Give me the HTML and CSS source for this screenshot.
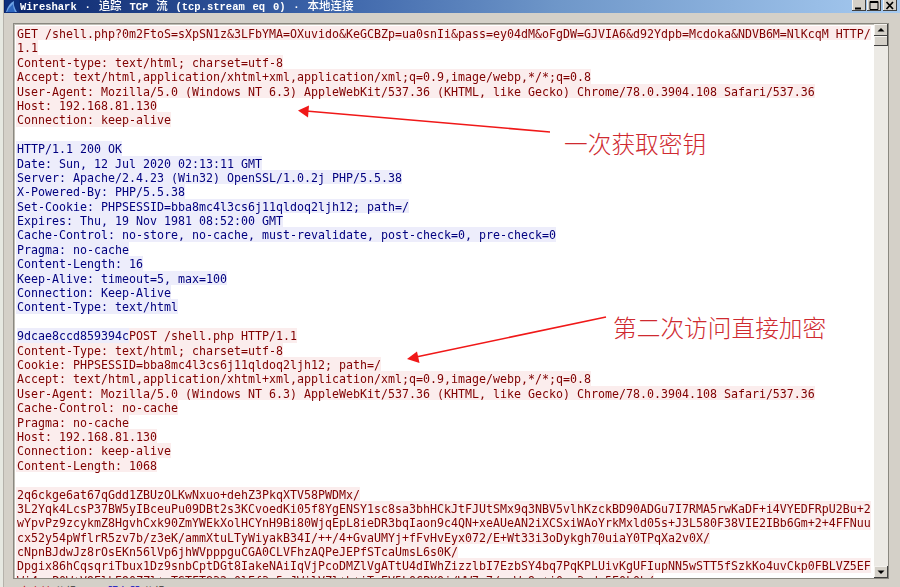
FILE: index.html
```html
<!DOCTYPE html>
<html lang="zh">
<head>
<meta charset="utf-8">
<title>Wireshark · 追踪 TCP 流 (tcp.stream eq 0) · 本地连接</title>
<link rel="stylesheet" href="styles.css">
</head>
<body>
<div class="window">
  <header class="titlebar">
    <svg class="app-icon" width="14" height="13" viewBox="0 0 14 13"><path d="M0 13 L0 0 L14 0 L14 13 Z" fill="#0d2f7c"/><path d="M1 12 Q3 4 9 1 Q8 6 12 12 Z" fill="#6fa3e6"/><path d="M2 12 Q4 7 8 4 Q8 8 10 12 Z" fill="#2f67c0"/></svg>
    <span class="title-text">Wireshark · <span class="title-cjk">追踪</span> TCP <span class="title-cjk">流</span> (tcp.stream eq 0) · <span class="title-cjk">本地连接</span></span>
    <div class="win-buttons">
      <span class="win-btn"><svg width="14" height="11" viewBox="0 0 14 11"><rect x="3" y="7.500" width="6" height="2" fill="#000"/></svg></span>
      <span class="win-btn"><svg width="14" height="11" viewBox="0 0 14 11"><path d="M3 1.500H11V9.500H3Z M3 2.500H11" fill="none" stroke="#000" stroke-width="1"/></svg></span>
      <span class="win-btn win-close"><svg width="14" height="11" viewBox="0 0 14 11"><path d="M3.500 2L10 9M10 2L3.500 9" fill="none" stroke="#000" stroke-width="1.700"/></svg></span>
    </div>
  </header>
  <main class="content">
    <div class="viewer">
      <div class="stream">
        <div class="line c">GET /shell.php?0m2FtoS=sXpSN1z&amp;3LFbYMA=OXuvido&amp;KeGCBZp=ua0snIi&amp;pass=ey04dM&amp;oFgDW=GJVIA6&amp;d92Ydpb=Mcdoka&amp;NDVB6M=NlKcqM HTTP/</div>
        <div class="line c">1.1</div>
        <div class="line c">Content-type: text/html; charset=utf-8</div>
        <div class="line c">Accept: text/html,application/xhtml+xml,application/xml;q=0.9,image/webp,*/*;q=0.8</div>
        <div class="line c">User-Agent: Mozilla/5.0 (Windows NT 6.3) AppleWebKit/537.36 (KHTML, like Gecko) Chrome/78.0.3904.108 Safari/537.36</div>
        <div class="line c">Host: 192.168.81.130</div>
        <div class="line c">Connection: keep-alive</div>
        <div class="blank"></div>
        <div class="line s">HTTP/1.1 200 OK</div>
        <div class="line s">Date: Sun, 12 Jul 2020 02:13:11 GMT</div>
        <div class="line s">Server: Apache/2.4.23 (Win32) OpenSSL/1.0.2j PHP/5.5.38</div>
        <div class="line s">X-Powered-By: PHP/5.5.38</div>
        <div class="line s">Set-Cookie: PHPSESSID=bba8mc4l3cs6j11qldoq2ljh12; path=/</div>
        <div class="line s">Expires: Thu, 19 Nov 1981 08:52:00 GMT</div>
        <div class="line s">Cache-Control: no-store, no-cache, must-revalidate, post-check=0, pre-check=0</div>
        <div class="line s">Pragma: no-cache</div>
        <div class="line s">Content-Length: 16</div>
        <div class="line s">Keep-Alive: timeout=5, max=100</div>
        <div class="line s">Connection: Keep-Alive</div>
        <div class="line s">Content-Type: text/html</div>
        <div class="blank"></div>
        <div class="line split"><span class="s">9dcae8ccd859394c</span><span class="c">POST /shell.php HTTP/1.1</span></div>
        <div class="line c">Content-Type: text/html; charset=utf-8</div>
        <div class="line c">Cookie: PHPSESSID=bba8mc4l3cs6j11qldoq2ljh12; path=/</div>
        <div class="line c">Accept: text/html,application/xhtml+xml,application/xml;q=0.9,image/webp,*/*;q=0.8</div>
        <div class="line c">User-Agent: Mozilla/5.0 (Windows NT 6.3) AppleWebKit/537.36 (KHTML, like Gecko) Chrome/78.0.3904.108 Safari/537.36</div>
        <div class="line c">Cache-Control: no-cache</div>
        <div class="line c">Pragma: no-cache</div>
        <div class="line c">Host: 192.168.81.130</div>
        <div class="line c">Connection: keep-alive</div>
        <div class="line c">Content-Length: 1068</div>
        <div class="blank"></div>
        <div class="line c">2q6ckge6at67qGdd1ZBUzOLKwNxuo+dehZ3PkqXTV58PWDMx/</div>
        <div class="line c">3L2Yqk4LcsP37BW5yIBceuPu09DBt2s3KCvoedKi05f8YgENSY1sc8sa3bhHCkJtFJUtSMx9q3NBV5vlhKzckBD90ADGu7I7RMA5rwKaDF+i4VYEDFRpU2Bu+2</div>
        <div class="line c">wYpvPz9zcykmZ8HgvhCxk90ZmYWEkXolHCYnH9Bi80WjqEpL8ieDR3bqIaon9c4QN+xeAUeAN2iXCSxiWAoYrkMxld05s+J3L580F38VIE2IBb6Gm+2+4FFNuu</div>
        <div class="line c">cx52y54pWflrR5zv7b/z3eK/ammXtuLTyWiyakB34I/++/4+GvaUMYj+fFvHvEyx072/E+Wt33i3oDykgh70uiaY0TPqXa2v0X/</div>
        <div class="line c">cNpnBJdwJz8rOsEKn56lVp6jhWVpppguCGA0CLVFhzAQPeJEPfSTcaUmsL6s0K/</div>
        <div class="line c">Dpgix86hCqsqriTbux1Dz9snbCptDGt8IakeNAiIqVjPcoDMZlVgATtU4dIWhZizzlbI7EzbSY4bq7PqKPLUivKgUFIupNN5wSTT5fSzkKo4uvCkp0FBLVZ5EF</div>
        <div class="line c">Wi4pcP0W+V9ElkE90ZZl+uTSTFT832c0lEf3z5cJWilVZl+h+iTzEV5LQCPXQj/WW7z7/wuWz9z+i0wc3cdc5E0k0b/</div>
      </div>
      <div class="scrollbar">
        <span class="sb-btn"><svg width="14" height="12" viewBox="0 0 14 12"><path d="M3.500 7.500H10.500L7 4Z" fill="#000"/></svg></span>
        <span class="sb-thumb"></span>
        <span class="sb-track"></span>
        <span class="sb-btn"><svg width="14" height="12" viewBox="0 0 14 12"><path d="M3.500 4.500H10.500L7 8Z" fill="#000"/></svg></span>
      </div>
    </div>
    <div class="status"><span class="st-c">客户端</span> 分组，<span class="st-s">服务器</span> 分组，turns.</div>
  </main>
</div>
<svg class="arrows" width="900" height="587" viewBox="0 0 900 587">
  <path d="M550 132L306 111" stroke="#f01818" stroke-width="1.600" fill="none"/>
  <path d="M298 110.500L309 105.500L308 117.500Z" fill="#f01818"/>
  <path d="M606 317L416 357" stroke="#f01818" stroke-width="1.600" fill="none"/>
  <path d="M407 359L417 351.500L419.500 363Z" fill="#f01818"/>
</svg>
<div class="note note-one">一次获取密钥</div>
<div class="note note-two">第二次访问直接加密</div>
</body>
</html>
```

FILE: styles.css
```css
html, body {
  margin: 0;
  padding: 0;
  height: 587px;
  overflow: hidden;
}
body {
  position: relative;
  background: #e6e8e1;
  padding-left: 3px;
  box-sizing: border-box;
}
.window {
  height: 587px;
  display: flex;
  flex-direction: column;
  background: #d4d0c8;
  border-left: 1px solid #b5b2ab;
  box-sizing: border-box;
}
.titlebar {
  height: 13px;
  flex: none;
  display: flex;
  align-items: flex-start;
  background: linear-gradient(90deg, #0a246a 0%, #3a62a8 35%, #6f97c9 62%, #a6caf0 100%);
  overflow: hidden;
}
.app-icon {
  flex: none;
  margin-left: 1px;
}
.title-text {
  margin-left: 1px;
  color: #fff;
  font: bold 10.5px/13px "Liberation Mono", "Noto Sans CJK SC", monospace;
  word-spacing: 1.5px;
  white-space: nowrap;
  filter: blur(0.3px);
}
.title-cjk {
  font-size: 11.5px;
  font-weight: 500;
}
.win-buttons {
  margin-left: auto;
  margin-right: 3px;
  display: flex;
  gap: 1px;
}
.win-btn {
  width: 14px;
  height: 11px;
  background: #d4d0c8;
  box-shadow: inset -1px -1px 0 #404040, inset 1px 0 0 #f4f2ee;
  display: block;
}
.win-btn svg { display: block; }
.win-close { margin-left: 1px; }
.content {
  flex: 1;
  display: flex;
  flex-direction: column;
  padding: 10px 11px 0 9px;
  min-height: 0;
}
.viewer {
  height: 556px;
  flex: none;
  display: flex;
  background: #fff;
  border: 1px solid #8a8880;
  box-shadow: inset 1px 1px 0 #c0bdb5;
  box-sizing: border-box;
  overflow: hidden;
}
.stream {
  flex: 1;
  min-width: 0;
  padding: 2px 0 0 2px;
  overflow: hidden;
  font: 11.63px/14.4px "DejaVu Sans Mono", "Liberation Mono", monospace;
  filter: blur(0.3px);
}
.line {
  height: 14.4px;
  line-height: 16px;
  width: fit-content;
  white-space: pre;
  padding-left: 1px;
}
.blank { height: 14.4px; }
.c { background: #fbeded; color: #7f0000; }
.s { background: #ededfb; color: #00007f; }
.split { display: flex; }
.split > span { display: block; height: 14.4px; }
.scrollbar {
  width: 14px;
  flex: none;
  display: flex;
  flex-direction: column;
  background: #eceae5;
}
.sb-btn, .sb-thumb {
  flex: none;
  background: #d4d0c8;
  box-shadow: inset -1px -1px 0 #404040, inset 1px 1px 0 #f4f2ee;
  display: block;
}
.sb-btn { height: 12px; }
.sb-btn svg { display: block; }
.sb-thumb { height: 10px; }
.sb-track { flex: 1; }
.status {
  margin-top: 5px;
  font: 11px/14px "Noto Sans CJK SC", sans-serif;
  color: #333;
  padding-left: 6px;
}
.st-c { color: #c00000; }
.st-s { color: #0000c0; margin-left: 20px; }
.arrows {
  position: absolute;
  left: 0;
  top: 0;
  pointer-events: none;
}
.note {
  position: absolute;
  font: 300 23.7px/28px "Noto Sans CJK SC", "Noto Sans CJK JP", sans-serif;
  color: #cf2a30;
  white-space: nowrap;
}
.note-one { left: 564px; top: 129px; }
.note-two { left: 613px; top: 313px; }
```
